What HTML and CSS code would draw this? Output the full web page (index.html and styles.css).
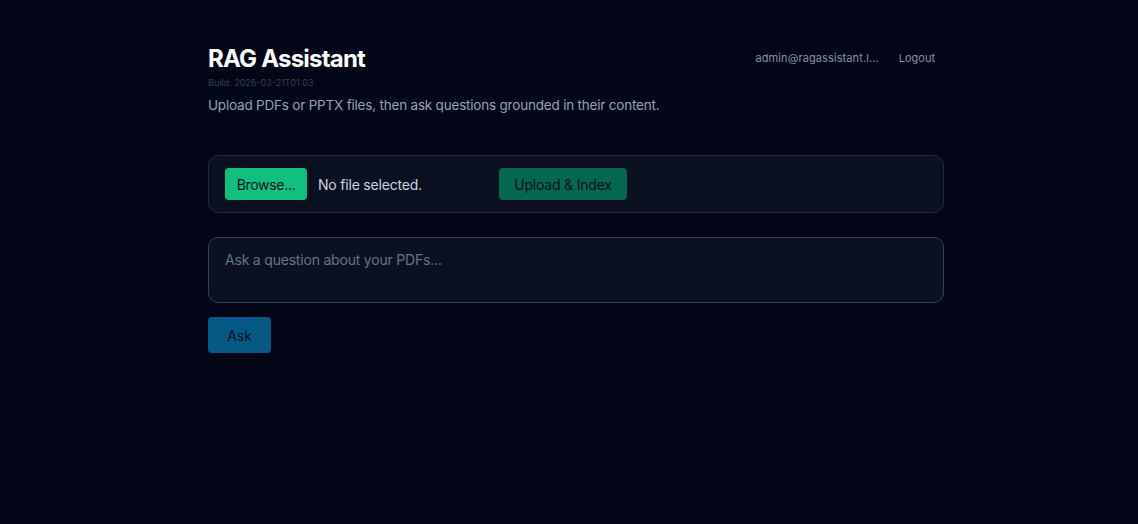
FILE: index.html
```html
<!DOCTYPE html>
<html>
<head>
<meta charset="utf-8">
<link rel="stylesheet" href="styles.css">
</head>
<body>
<main class="wrap">
  <header class="top">
    <div class="brand">
      <h1 class="title">RAG Assistant</h1>
      <div class="build">Build: 2026-03-21T01:03</div>
      <p class="subtitle">Upload PDFs or PPTX files, then ask questions grounded in their content.</p>
    </div>
    <nav class="user">
      <span class="email">admin@ragassistant.l...</span>
      <span class="logout">Logout</span>
    </nav>
  </header>

  <section class="card upload">
    <div class="file">
      <span class="browse">Browse...</span>
      <span class="nofile">No file selected.</span>
    </div>
    <button class="btn-upload">Upload &amp; Index</button>
  </section>

  <div class="ask-box">
    <span class="placeholder">Ask a question about your PDFs...</span>
  </div>
  <button class="btn-ask">Ask</button>
</main>
</body>
</html>
```

FILE: styles.css
```css
* { box-sizing: border-box; }
html, body { margin: 0; padding: 0; }
body {
  background: #020617;
  font-family: Inter, "Open Sans", "Liberation Sans", sans-serif;
  color: #e2e8f0;
  width: 1138px;
  height: 524px;
  overflow: hidden;
}
.wrap {
  width: 736px;
  margin-left: 208px;
  padding-top: 44px;
}
.top {
  display: flex;
  justify-content: space-between;
  align-items: flex-start;
}
.title {
  margin: 0;
  font-size: 24px;
  font-weight: 700;
  letter-spacing: -0.8px;
  color: #ffffff;
  line-height: 30px;
}
.build {
  font-size: 9px;
  color: #334155;
  line-height: 12px;
  margin-top: 3px;
}
.subtitle {
  margin: 7px 0 0;
  font-size: 13.5px;
  line-height: 18px;
  color: #94a3b8;
  letter-spacing: -0.2px;
}
.user {
  display: flex;
  gap: 20px;
  font-size: 11px;
  color: #8391a7;
  padding-top: 7px;
  padding-right: 9px;
}
.email { letter-spacing: 0.1px; }
.card {
  background: #0b1120;
  border: 1px solid #1e293b;
  border-radius: 10px;
}
.upload {
  margin-top: 41px;
  height: 58px;
  display: flex;
  align-items: center;
  padding: 0 16px;
}
.file {
  width: 274px;
  display: flex;
  align-items: center;
  gap: 11px;
}
.browse {
  display: inline-flex;
  align-items: center;
  justify-content: center;
  width: 82px;
  height: 32px;
  background: #10c07e;
  color: #081020;
  border-radius: 4px;
  font-size: 14px;
  letter-spacing: -0.3px;
}
.nofile {
  font-size: 14px;
  color: #cbd5e1;
  letter-spacing: -0.2px;
}
.btn-upload {
  width: 128px;
  height: 32px;
  background: #04684f;
  color: #081020;
  border: none;
  border-radius: 4px;
  font-family: inherit;
  font-size: 14px;
  letter-spacing: -0.2px;
  padding: 0;
}
.ask-box {
  margin-top: 24px;
  height: 66px;
  background: #0b1120;
  border: 1px solid #334155;
  border-radius: 10px;
  padding: 11px 16px;
}
.placeholder {
  font-size: 14px;
  color: #64748b;
  letter-spacing: -0.2px;
}
.btn-ask {
  display: block;
  margin-top: 14px;
  width: 63px;
  height: 36px;
  background: #075985;
  color: #081020;
  border: none;
  border-radius: 4px;
  font-family: inherit;
  font-size: 14px;
  padding: 0;
}
```
